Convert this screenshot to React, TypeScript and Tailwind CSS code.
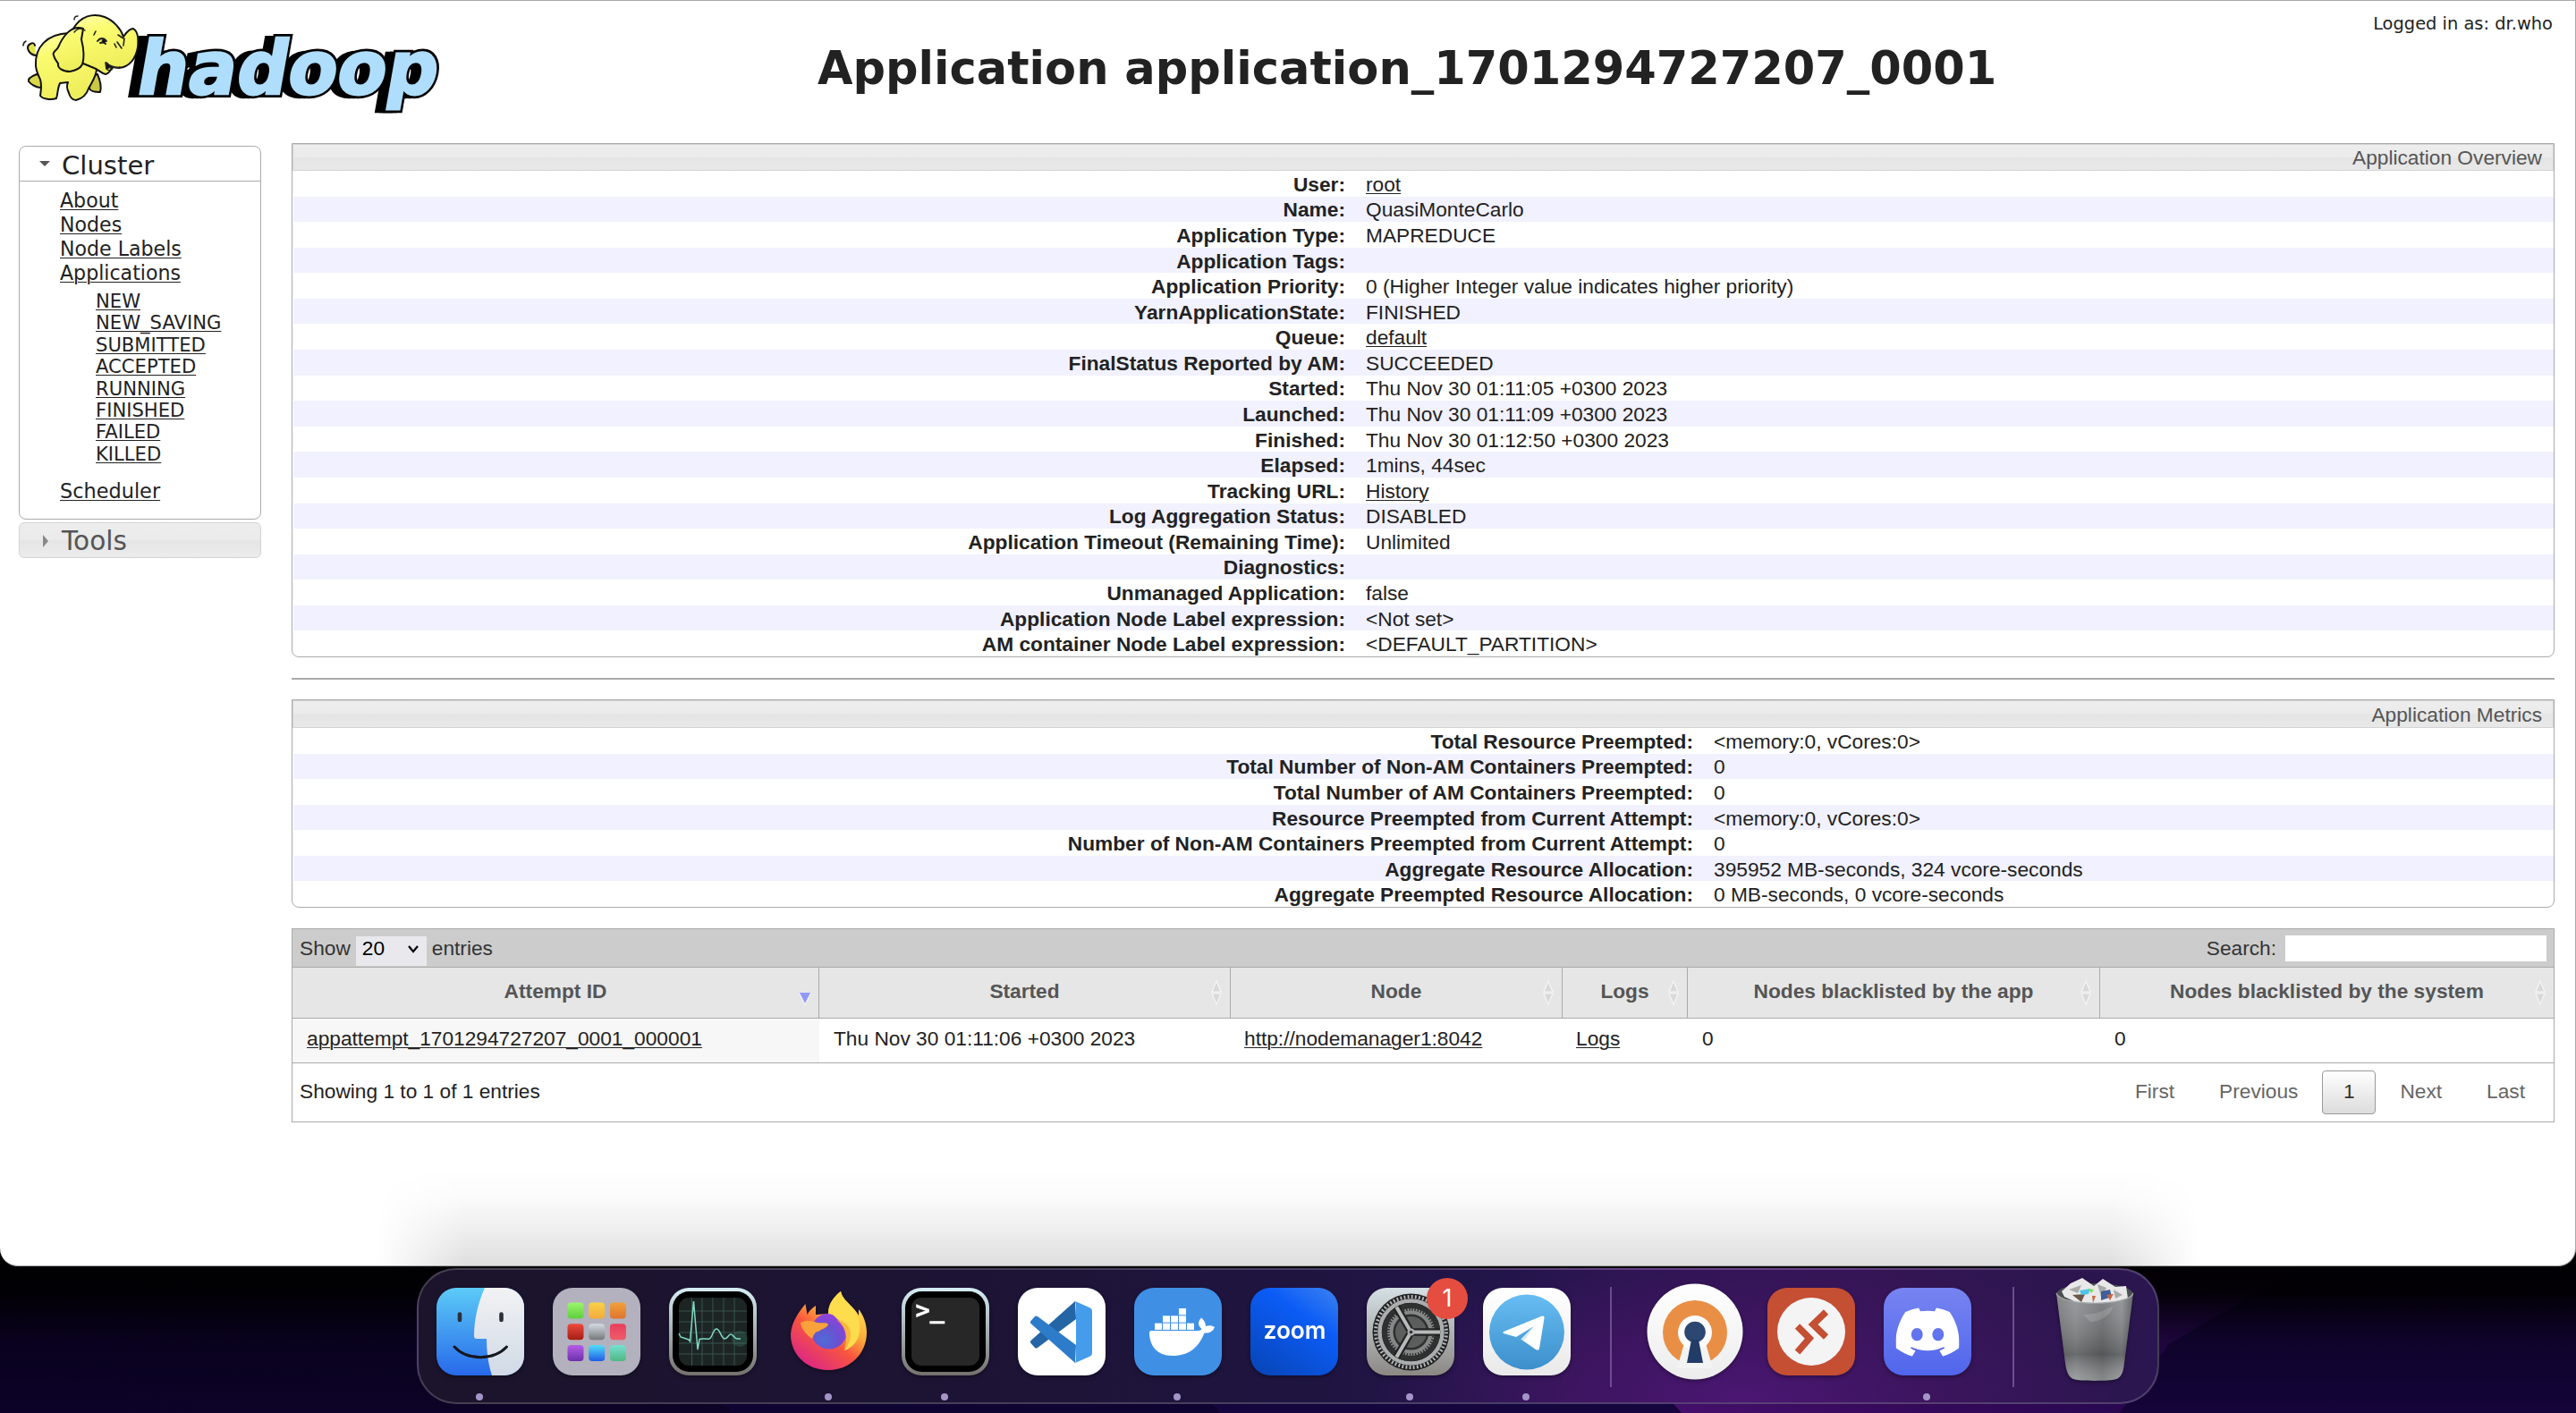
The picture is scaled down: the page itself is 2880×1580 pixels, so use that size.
import React from "react";
import { SiDiscord } from "react-icons/si";

const overview: [string, string, boolean?][] = [
  ["User:", "root", true],
  ["Name:", "QuasiMonteCarlo"],
  ["Application Type:", "MAPREDUCE"],
  ["Application Tags:", ""],
  ["Application Priority:", "0 (Higher Integer value indicates higher priority)"],
  ["YarnApplicationState:", "FINISHED"],
  ["Queue:", "default", true],
  ["FinalStatus Reported by AM:", "SUCCEEDED"],
  ["Started:", "Thu Nov 30 01:11:05 +0300 2023"],
  ["Launched:", "Thu Nov 30 01:11:09 +0300 2023"],
  ["Finished:", "Thu Nov 30 01:12:50 +0300 2023"],
  ["Elapsed:", "1mins, 44sec"],
  ["Tracking URL:", "History", true],
  ["Log Aggregation Status:", "DISABLED"],
  ["Application Timeout (Remaining Time):", "Unlimited"],
  ["Diagnostics:", ""],
  ["Unmanaged Application:", "false"],
  ["Application Node Label expression:", "<Not set>"],
  ["AM container Node Label expression:", "<DEFAULT_PARTITION>"],
];

const metrics: [string, string, boolean?][] = [
  ["Total Resource Preempted:", "<memory:0, vCores:0>"],
  ["Total Number of Non-AM Containers Preempted:", "0"],
  ["Total Number of AM Containers Preempted:", "0"],
  ["Resource Preempted from Current Attempt:", "<memory:0, vCores:0>"],
  ["Number of Non-AM Containers Preempted from Current Attempt:", "0"],
  ["Aggregate Resource Allocation:", "395952 MB-seconds, 324 vcore-seconds"],
  ["Aggregate Preempted Resource Allocation:", "0 MB-seconds, 0 vcore-seconds"],
];

const link = "underline decoration-1 underline-offset-[2px]";

function HadoopLogo() {
  const word = {
    fontFamily: '"DejaVu Sans", sans-serif',
    fontWeight: 700,
    fontSize: 83,
    textLength: 336,
    lengthAdjust: "spacingAndGlyphs" as const,
  };
  return (
    <svg width="500" height="140" viewBox="0 0 500 140" className="block shrink-0 overflow-visible">
      <defs>
        <linearGradient id="el" x1="0" y1="0" x2="0.3" y2="1">
          <stop offset="0" stopColor="#ffffb0" />
          <stop offset="0.35" stopColor="#fbfb70" />
          <stop offset="1" stopColor="#eeee5c" />
        </linearGradient>
      </defs>
      <g strokeLinejoin="miter" fill="#000" stroke="#000">
        <g transform="translate(150 104) skewX(-10)">
          <text {...word} x="-10" y="1" strokeWidth="6">hadoop</text>
          <text {...word} x="-5" y="1" strokeWidth="6">hadoop</text>
          <text {...word} x="0" y="0" strokeWidth="8">hadoop</text>
        </g>
      </g>
      <g transform="translate(150 104) skewX(-10)" fill="#afdefc" stroke="#afdefc" strokeWidth="2.5">
        <text {...word} x="0" y="0">hadoop</text>
      </g>
      <g stroke="#111" strokeWidth="2" strokeLinejoin="round" strokeLinecap="round" fill="url(#el)">
        <path d="M40 61c-8-1-12-10-6-13 3-2 5 0 5 2" fill="#e3e34e" />
        <path d="M41 82c-5 2-10 5-9 8 3 4 9 7 14 7l6-8Z" fill="#d8d84a" />
        <path d="M100 98c1 3 5 4 12 4 2-7 0-13-3-20l-8 2Z" fill="#c9c944" />
        <path d="M77 36C52 37 39 52 40 72c0 6 3 11 5 16 2 6 1 11 0 18 3 4 12 5 18 3 2-6 1-11 4-17l9-1c-2 4-1 8 1 12 1 4 4 8 8 8 8-2 12-7 14-13 4-8 9-14 9-22l4-14Z" />
        <path d="M82 31C90 17 104 13 117 18c10 4 18 13 21 22 3-4 6-9 11-9 5 3 6 12 5 21-2 12-9 22-21 23-4 0-6-1-8-1-1 3-2 7-7 8-5-1-9-6-13-7l-12-5-20-12Z" />
        <path d="M93 31C80 26 70 40 65 52c-2 4-7 5-5 9 1 4 3 6 5 9-1 5 5 9 13 9 6-1 12-4 14-8 3-9 1-20-1-28Z" />
      </g>
      <g fill="none" stroke="#222" strokeLinecap="round">
        <path d="M109 45c3-4 7-4 10 0M112 47c3-1 5-1 6 1" strokeWidth="2" />
        <circle cx="116" cy="45" r="2" fill="#111" />
        <path d="M105 38l2-4M132 38l6 4M131 46l5 7M128 48l2 4M139 42l-1 8M119 69c3 4 10 6 15 5M118 69l1 7c3 3 6 2 7-1" strokeWidth="1.6" />
        <path d="M83 35c4-5 8-5 12-2M26 50c0-2 1-4 3-5M83 21c0-3 1-4 4-4" strokeWidth="1.5" />
        <path d="M119 70l0 6 6-2Z" fill="#111" />
      </g>
    </svg>
  );
}

function Caption({ children, tall }: { children: string; tall?: boolean }) {
  return (
    <div
      className={
        (tall ? "h-[31px] " : "h-[30px] ") +
        "flex items-center justify-end border border-[#d3d3d3] bg-[linear-gradient(#ededed_0%,#ebebeb_48%,#e5e5e5_52%,#e8e8e8_100%)] pr-[12px] pt-px text-[#555]"
      }
    >
      {children}
    </div>
  );
}

function InfoPanel({ title, rows, cols, body, tall }: { title: string; rows: [string, string, boolean?][]; cols: string; body: string; tall?: boolean }) {
  return (
    <section className="rounded-b-[8px] border border-[#aaa]">
      <Caption tall={tall}>{title}</Caption>
      <div className={body}>
        {rows.map(([k, v, l], i) => (
          <div key={k} className={`grid min-h-0 flex-1 items-center gap-x-[23px] pt-px leading-[26px] ${cols} ${i % 2 ? "ml-px bg-[#f1f1ff]" : "ml-px"}`}>
            <span className="text-right font-bold">{k}</span>
            <span>{l ? <a className={link}>{v}</a> : v}</span>
          </div>
        ))}
      </div>
    </section>
  );
}

function SortIcon() {
  return (
    <svg width="14" height="30" viewBox="0 0 14 30" className="absolute right-[8px] top-[13px]">
      <path d="M7 2 12 14H2ZM7 28 2 16H12Z" fill="#d9d9d9" stroke="#f5f5f5" strokeWidth="1.2" />
    </svg>
  );
}

function Th({ children, sorted, last }: { children: string; sorted?: boolean; last?: boolean }) {
  return (
    <div className={`relative flex items-center justify-center pb-[3px] font-bold text-[#555] ${last ? "" : "border-r border-[#aaa]"}`}>
      {children}
      {sorted ? (
        <svg width="14" height="16" viewBox="0 0 14 16" className="absolute right-[8px] top-[28px]">
          <path d="M0 1H14L7 15Z" fill="#f4f4f4" />
          <path d="M1 0H13L7 12Z" fill="#9297fb" />
        </svg>
      ) : (
        <SortIcon />
      )}
    </div>
  );
}

const columns = "grid grid-cols-[589px_460px_371px_140px_461px_1fr]";

function AttemptsTable() {
  return (
    <section className="mt-[23px] w-[2530px] border border-[#aaa]">
      <div className="flex h-[43px] items-center justify-between border-b border-[#aaa] bg-[#ccc] pl-[8px] pr-[8px] text-[#333]">
        <div className="flex items-center">
          <span className="pt-px">Show</span>
          <span className="ml-[6px] mt-[6px] flex h-[33px] w-[79px] items-center justify-between bg-[#e9e9ed] pl-[7px] pr-[7px] pb-[5px] text-black">
            20
            <svg width="16" height="16" viewBox="0 0 16 16"><path d="m3 5 5 6 5-6" fill="none" stroke="#000" strokeWidth="2.2" /></svg>
          </span>
          <span className="ml-[6px] pt-px">entries</span>
        </div>
        <div className="flex items-center">
          <span className="pt-px">Search:</span>
          <span className="ml-[10px] mt-[2px] h-[29px] w-[292px] bg-white" />
        </div>
      </div>
      <div className={`${columns} h-[57px] border-b border-[#aaa] bg-[#e6e6e6]`}>
        <Th sorted>Attempt ID</Th>
        <Th>Started</Th>
        <Th>Node</Th>
        <Th>Logs</Th>
        <Th>Nodes blacklisted by the app</Th>
        <Th last>Nodes blacklisted by the system</Th>
      </div>
      <div className={`${columns} h-[50px] border-b border-[#aaa] *:flex *:items-center *:pl-4 *:pb-1`}>
        <div className="bg-[#f7f7f7]"><a className={link}>appattempt_1701294727207_0001_000001</a></div>
        <div>Thu Nov 30 01:11:06 +0300 2023</div>
        <div className="-ml-px"><a className={link}>http://nodemanager1:8042</a></div>
        <div className="-ml-px"><a className={link}>Logs</a></div>
        <div>0</div>
        <div>0</div>
      </div>
      <div className="flex h-[65px] items-center justify-between pl-[8px] pr-[32px]">
        <span className="pb-[3px]">Showing 1 to 1 of 1 entries</span>
        <div className="flex items-center text-[#666]">
          <span className="pb-[3px]">First</span>
          <span className="ml-[50px] pb-[3px]">Previous</span>
          <span className="ml-[27px] flex h-[49px] w-[60px] items-center justify-center rounded-[4px] border border-[#999] bg-linear-to-b from-white to-[#dcdcdc] pb-[3px] text-[#333]">1</span>
          <span className="ml-[27px] pb-[3px]">Next</span>
          <span className="ml-[50px] pb-[3px]">Last</span>
        </div>
      </div>
    </section>
  );
}

function Sidebar() {
  return (
    <nav className="ml-[21px] mt-[3px] w-[271px] shrink-0 font-['DejaVu_Sans',sans-serif]">
      <div className="h-[418px] rounded-[8px] border border-[#aaa]">
        <div className="flex h-[39px] items-center border-b border-[#aaa] pl-[21px] pt-[5px] text-[29.1px]">
          <svg width="14" height="8" viewBox="0 0 14 8" className="-mt-[3px] mr-[12px]"><path d="M1 0H13L7 6Z" fill="#555" /></svg>
          Cluster
        </div>
        <ul className="mt-[8px] pl-[45px] text-[22.1px] leading-[27px]">
          {["About", "Nodes", "Node Labels", "Applications"].map((t) => (
            <li key={t}><a className={link}>{t}</a></li>
          ))}
        </ul>
        <ul className="mt-[6px] pl-[85px] text-[21.13px] leading-[24.4px]">
          {["NEW", "NEW_SAVING", "SUBMITTED", "ACCEPTED", "RUNNING", "FINISHED", "FAILED", "KILLED"].map((t) => (
            <li key={t}><a className={link}>{t}</a></li>
          ))}
        </ul>
        <div className="mt-[16px] pl-[45px] text-[22.4px] leading-[27px]"><a className={link}>Scheduler</a></div>
      </div>
      <div className="mt-[3px] flex h-[40px] items-center rounded-[6px] border border-[#d3d3d3] bg-[linear-gradient(#ededed_0%,#ebebeb_48%,#e5e5e5_52%,#ececec_100%)] pl-[25px] pt-[2px] text-[29.6px] text-[#555]">
        <svg width="8" height="14" viewBox="0 0 8 14" className="mr-[14px]"><path d="M1 0 7 7 1 14Z" fill="#888" /></svg>
        Tools
      </div>
    </nav>
  );
}

function Squircle({ fill }: { fill: string }) {
  return <rect x="0" y="0" width="98" height="98" rx="22" fill={fill} />;
}

function Grad({ id, from, to, x2 = 0, y2 = 1 }: { id: string; from: string; to: string; x2?: number; y2?: number }) {
  return (
    <linearGradient id={id} x1="0" y1="0" x2={x2} y2={y2}>
      <stop offset="0" stopColor={from} />
      <stop offset="1" stopColor={to} />
    </linearGradient>
  );
}

function Finder() {
  return (
    <>
      <defs>
        <Grad id="fa" from="#5ccbf7" to="#2769ea" />
        <Grad id="fb" from="#f2f2f4" to="#d0dae6" />
        <clipPath id="fc"><rect width="98" height="98" rx="22" /></clipPath>
      </defs>
      <Squircle fill="url(#fa)" />
      <path clipPath="url(#fc)" d="M54 0C46 18 42 36 42 54q0 3 3 3H56C56 72 58 86 62 98H98V0Z" fill="url(#fb)" />
      <path d="M26 29.500v6.500M72.500 29.500v6.500" stroke="#2b2f36" strokeWidth="4.600" strokeLinecap="round" />
      <path d="M20 66c14 15.500 44 15.500 58.500 0" fill="none" stroke="#15171c" strokeWidth="3" strokeLinecap="round" />
    </>
  );
}

const tiles: [string, string][] = [
  ["#9df56a", "#5dcf3c"], ["#f8d147", "#f3ab3c"], ["#f0a13a", "#df7430"],
  ["#ec4a3c", "#a51d14"], ["#d3dbe2", "#76787a"], ["#e83f5c", "#ee5c69"],
  ["#b45de5", "#6c30ac"], ["#52dcfb", "#1f5be6"], ["#79e0d0", "#4fb783"],
];

function Launchpad() {
  return (
    <>
      <Squircle fill="#b3b1bd" />
      {tiles.map(([a, b], i) => (
        <g key={a}>
          <defs><Grad id={`lp${i}`} from={a} to={b} /></defs>
          <rect x={16.500 + (i % 3) * 23.700} y={16.500 + Math.floor(i / 3) * 23.800} width="18" height="18" rx="4" fill={`url(#lp${i})`} />
        </g>
      ))}
    </>
  );
}

function Bezel({ id, screen }: { id: string; screen: string }) {
  return (
    <>
      <defs><Grad id={id} from="#d6edf5" to="#74716e" /></defs>
      <Squircle fill={`url(#${id})`} />
      <rect x="4" y="4" width="90" height="90" rx="18.500" fill="#000" />
      <rect x="11" y="11" width="76" height="76" rx="11" fill={screen} />
    </>
  );
}

function Activity() {
  return (
    <>
      <Bezel id="ab" screen="#1c2523" />
      <path d="M25.500 11V87M37 11V87M49 11V87M61 11V87M73 11V87M11 26H87M11 38H87M11 50H87M11 62H87M11 74H87" stroke="#3f5f58" strokeWidth="0.900" opacity="0.900" />
      <circle cx="79" cy="57" r="9" fill="#3f8f7c" opacity="0.250" />
      <path d="M11 51 13 55 22 58 23.500 60 27.500 15 32 69 34 57.500C38 56 41 58 45 57 49 55 49 46 53 46S58 56 62 57C66 57 66 52 69 52S73 57 76 57H80" fill="none" stroke="#7fd8c4" strokeWidth="1.500" />
    </>
  );
}

function Firefox() {
  return (
    <>
      <defs>
        <linearGradient id="ffa" x1="0.850" y1="0.100" x2="0.250" y2="0.950">
          <stop offset="0" stopColor="#ffe452" />
          <stop offset="0.350" stopColor="#fdaa3a" />
          <stop offset="0.600" stopColor="#f9553f" />
          <stop offset="1" stopColor="#dd2a80" />
        </linearGradient>
        <radialGradient id="ffb" cx="0.350" cy="0.750" r="0.850">
          <stop offset="0" stopColor="#4f6bd6" />
          <stop offset="0.500" stopColor="#6d4fd0" />
          <stop offset="1" stopColor="#a53be0" />
        </radialGradient>
      </defs>
      <path d="M62 4C54 10 48 18 48 29L34 30V20C29 23 26 27 24.500 30L22.500 18C15 27 7 38 6 52 6 75 24 92 48 92S91 74 91 50C91 40 87 30 82 24L82 31C78 22 64 15 62 4Z" fill="url(#ffa)" />
      <circle cx="49" cy="48.500" r="20" fill="url(#ffb)" />
      <path d="M48 29C48 18 54 10 62 4 63 14 78 20 82 34 87 54 78 66 66 70 74 60 74 44 58 35 55 31 52 29 48 29Z" fill="#fddc4d" />
      <path d="M58 36C74 38 78 56 66 69 70 56 68 44 58 36Z" fill="#fdb43b" />
      <path d="M17 39C25 35 30 37 36 39 41 40 46 38 48 41 47 45 40 46 37 49 33 48 31 55 30 57 25 54 17 45 17 39Z" fill="#f9a13a" />
    </>
  );
}

function Terminal() {
  return (
    <>
      <Bezel id="tb" screen="#272727" />
      <text x="15.500" y="34" fill="#fff" stroke="#fff" strokeWidth="0.500" fontFamily='"DejaVu Sans Mono", monospace' fontWeight="700" fontSize="27">&gt;_</text>
    </>
  );
}

function VsCode() {
  return (
    <>
      <Squircle fill="#fff" />
      <path d="M64 15 14.500 59Q13 60.500 14.500 62L19 67Q20.500 68 22 67L65 35Z" fill="#2465a5" />
      <path d="M64 84 14.500 40Q13 38.500 14.500 37L19 32Q20.500 31 22 32L65 64Z" fill="#2d7cc9" />
      <path d="M64 15 81 22.500Q83 23.500 83 26V73Q83 75.500 81 76.500L64 84Q65 82 65 79V20Z" fill="#459ceb" />
    </>
  );
}

function Docker() {
  const boxes = [[50, 23], [32, 31.3], [41, 31.3], [50, 31.3], [23, 39.6], [32, 39.6], [41, 39.6], [50, 39.6], [59, 39.6]];
  return (
    <>
      <Squircle fill="#3f90e5" />
      {boxes.map(([x, y]) => <rect key={`${x}-${y}`} x={x} y={y} width="8" height="7.300" fill="#fff" />)}
      <path d="M17 50Q17 48 19 48H70C73 48 75 47.500 75.500 46 71 42 71 38 75 33.500 79 37 80 40 80 43 83 42 87 42 90 44 88 49 84 51 78.500 50.500 72 67 61 76 43 76 25 76 17 64 17 50Z" fill="#fff" />
    </>
  );
}

function Zoom() {
  return (
    <>
      <defs>
        <linearGradient id="zg" x1="0.900" y1="0" x2="0.200" y2="1">
          <stop offset="0" stopColor="#377ef0" />
          <stop offset="0.350" stopColor="#0b5cf6" />
          <stop offset="1" stopColor="#0847bd" />
        </linearGradient>
      </defs>
      <Squircle fill="url(#zg)" />
      <text x="14.500" y="56.500" fill="#fff" fontFamily='Inter, sans-serif' fontWeight="600" fontSize="27.500" textLength="70" lengthAdjust="spacingAndGlyphs">zoom</text>
    </>
  );
}

function Settings() {
  return (
    <>
      <defs><Grad id="sg" from="#d5e0e5" to="#8b8883" /></defs>
      <Squircle fill="url(#sg)" />
      <circle cx="49.500" cy="49.500" r="43" fill="#222323" />
      <circle cx="49.500" cy="49.500" r="39.500" fill="none" stroke="#b8bcbc" strokeWidth="4" strokeDasharray="1.800 2.336" />
      <circle cx="49.500" cy="49.500" r="35" fill="none" stroke="#a9adad" strokeWidth="4.500" />
      <circle cx="49.500" cy="49.500" r="32.500" fill="#2f3030" />
      <circle cx="49.500" cy="49.500" r="25" fill="none" stroke="#8d9090" strokeWidth="3" strokeDasharray="1.600 1.540" />
      <circle cx="49.500" cy="49.500" r="22" fill="none" stroke="#858888" strokeWidth="4" />
      <circle cx="49.500" cy="49.500" r="17.500" fill="#5c5e5e" />
      <path d="M49.500 49.500H82M49.500 49.500 33.300 21.400M49.500 49.500 33.300 77.600" stroke="#222323" strokeWidth="8.500" />
      <path d="M49.500 49.500H82M49.500 49.500 33.300 21.400M49.500 49.500 33.300 77.600" stroke="#b7baba" strokeWidth="4" />
      <circle cx="49.500" cy="49.500" r="4" fill="#aaadad" />
      <circle cx="49.500" cy="49.500" r="1.800" fill="#333" />
    </>
  );
}

function Telegram() {
  return (
    <>
      <defs><Grad id="tga" from="#ffffff" to="#e9e9e9" /><Grad id="tgb" from="#67bdf3" to="#3c8fcb" /></defs>
      <Squircle fill="url(#tga)" />
      <circle cx="49" cy="49.500" r="42" fill="url(#tgb)" />
      <path d="M23 49 66 31.500Q69 31 68.500 34L63 68Q62 71 59 69L42.500 57.500 57 43 37 55 23 51Q21.500 50 23 49Z" fill="#fff" />
      <path d="M42.500 57.500 57 43 46 59Z" fill="#d5e9f6" />
    </>
  );
}

function OpenVpn() {
  return (
    <>
      <defs><Grad id="og" from="#ffffff" to="#ececec" /></defs>
      <circle cx="49" cy="49" r="53.500" fill="url(#og)" />
      <circle cx="49" cy="50" r="36" fill="#e98f45" />
      <path d="M37 62H61L69 90H29Z" fill="#f3f3f3" />
      <circle cx="49" cy="50" r="19" fill="#fcfcfc" />
      <circle cx="49" cy="49.500" r="11.800" fill="#2c4770" />
      <path d="M45 58H53L58 84H40Z" fill="#223c68" />
    </>
  );
}

function RemoteDesktop() {
  return (
    <>
      <Squircle fill="#c44f33" />
      <circle cx="49" cy="49" r="38" fill="#f4f4f4" />
      <g fill="none" stroke="#c44f33" strokeWidth="7.500" strokeLinejoin="miter">
        <path d="M33.500 43 47 56.500 33.500 72" />
        <path d="M65.500 27 51 41 65.500 55" />
      </g>
    </>
  );
}

function Discord() {
  return (
    <>
      <defs><Grad id="dg" from="#7784f1" to="#5066ec" /></defs>
      <Squircle fill="url(#dg)" />
      <SiDiscord x="13.500" y="14" size={71} color="#fff" />
    </>
  );
}

function Trash() {
  return (
    <>
      <defs>
        <linearGradient id="tra" x1="0" y1="0" x2="1" y2="0">
          <stop offset="0" stopColor="#77797b" />
          <stop offset="0.250" stopColor="#8d9092" />
          <stop offset="0.600" stopColor="#707375" />
          <stop offset="0.850" stopColor="#8b8e90" />
          <stop offset="1" stopColor="#55585a" />
        </linearGradient>
        <linearGradient id="trb" x1="0" y1="0" x2="0" y2="1">
          <stop offset="0" stopColor="#fff" stopOpacity="0.100" />
          <stop offset="0.700" stopColor="#000" stopOpacity="0.250" />
          <stop offset="1" stopColor="#fff" stopOpacity="0.150" />
        </linearGradient>
      </defs>
      <ellipse cx="49" cy="7" rx="43" ry="12" fill="#4b4e52" />
      <path d="M12 4 22-5 35-11 48-2 58-10 72-1 84-2 86 12 66 17H30L15 10Z" fill="#e8e8e8" />
      <path d="M20 2 34-3 30 6ZM52-4 62 0 56 10ZM70 2l10 6-8 4Z" fill="#a9a9a9" />
      <path d="M24 8l14-1-4 9Z" fill="#6b5648" />
      <path d="M32 3l12-2-2 6-8 1Z" fill="#4fc4e8" />
      <path d="M42 1l6 1-3 4Z" fill="#7ed957" />
      <path d="M56 4l10-2 2 8-12 4Z" fill="#3f5f9c" />
      <path d="M62 8l8-1-4 7ZM46 9l4 0-3 8Z" fill="#c8673f" />
      <path d="M6 6C10 21 88 21 92 6L82 84C80 106 72 103 49 104 26 103 19 106 16 84Z" fill="url(#tra)" />
      <path d="M6 6C10 21 88 21 92 6L82 84C80 106 72 103 49 104 26 103 19 106 16 84Z" fill="url(#trb)" />
      <path d="M6 6C10 21 88 21 92 6" fill="none" stroke="#a7aaac" strokeWidth="1.200" />
      <path d="M36 30C48 30 60 26 70 20 66 32 54 38 44 38Z" fill="#fff" opacity="0.140" />
    </>
  );
}

function DockItem({ children, running, badge }: { children: React.ReactNode; running?: boolean; badge?: string }) {
  return (
    <div className="relative flex h-full w-[98px] shrink-0 flex-col items-center pt-[20px]">
      <svg width="98" height="98" viewBox="0 0 98 98" className="overflow-visible drop-shadow-[0_2px_2px_rgba(0,0,0,0.35)]">{children}</svg>
      {running && <span className="mt-[20px] mr-[2px] size-[8px] rounded-full bg-[#a594c8]" />}
      {badge && (
        <span className="absolute -right-[15px] top-[9px] flex size-[46px] items-center justify-center rounded-full bg-[#e44d40] pt-px font-['Inter',sans-serif] text-[27px] text-white">{badge}</span>
      )}
    </div>
  );
}

function Divider() {
  return <span className="mt-[19px] h-[112px] w-[2px] shrink-0 bg-[#7d5a9c]/80" />;
}

function Wallpaper() {
  return (
    <svg width="2880" height="180" viewBox="0 0 2880 180" className="absolute bottom-0 left-0">
      <defs>
        <linearGradient id="wa" x1="0" y1="0" x2="1" y2="0">
          <stop offset="0" stopColor="#0c0228" />
          <stop offset="0.300" stopColor="#0c0326" />
          <stop offset="0.650" stopColor="#140539" />
          <stop offset="0.860" stopColor="#1b0640" />
          <stop offset="1" stopColor="#140439" />
        </linearGradient>
        <linearGradient id="wb" x1="0" y1="0" x2="1" y2="0">
          <stop offset="0" stopColor="#4a1171" />
          <stop offset="0.400" stopColor="#35095c" />
          <stop offset="1" stopColor="#1c0645" />
        </linearGradient>
        <linearGradient id="wc" x1="0" y1="0" x2="0" y2="1">
          <stop offset="0" stopColor="#000" />
          <stop offset="0.250" stopColor="#000" stopOpacity="0.900" />
          <stop offset="0.550" stopColor="#000" stopOpacity="0.250" />
          <stop offset="1" stopColor="#000" stopOpacity="0" />
        </linearGradient>
      </defs>
      <rect width="2880" height="180" fill="url(#wa)" />
      <path d="M800 165 820 180H1360L1350 165Z" fill="#0e0432" />
      <path d="M1350 165 1365 180H1880L1860 165Z" fill="#15063f" />
      <path d="M1800 90 1880 180H2370L2640 0H1800Z" fill="url(#wb)" />
      <path d="M2370 180 2425 103 2600 0H2880V180Z" fill="#140439" />
      <rect width="2880" height="180" fill="url(#wc)" />
    </svg>
  );
}

export default function App() {
  return (
    <div className="relative flex h-[1580px] w-[2880px] flex-col overflow-hidden bg-black font-['Liberation_Sans',Arial,sans-serif] text-[22.71px] whitespace-nowrap text-[#222]">
      <Wallpaper />
      <main className="relative h-[1416px] shrink-0 overflow-hidden rounded-b-[20px] border-t border-r border-b border-[#a8a8a8] bg-white">
        <header className="flex h-[159px] items-start font-['DejaVu_Sans',sans-serif]">
          <HadoopLogo />
          <h1 className="ml-[414px] mt-[46px] text-[51.04px] leading-[60px] font-bold">Application application_1701294727207_0001</h1>
          <span className="mt-[12px] ml-auto mr-[25px] text-[19.43px] leading-[28px]">Logged in as: dr.who</span>
        </header>
        <div className="flex items-start">
          <Sidebar />
          <div className="ml-[34px] w-[2530px]">
            <InfoPanel title="Application Overview" rows={overview} cols="grid-cols-[1176px_1fr]" body="flex h-[543px] flex-col" />
            <hr className="mt-[23px] mb-[22px] h-[2px] border-0 bg-[#aaa]" />
            <InfoPanel title="Application Metrics" rows={metrics} cols="grid-cols-[1565px_1fr]" body="flex h-[200px] flex-col" tall />
            <AttemptsTable />
          </div>
        </div>
        <div className="absolute bottom-0 left-[420px] h-[105px] w-[2040px] bg-[linear-gradient(0deg,rgba(0,0,0,0.13)_0%,rgba(0,0,0,0.07)_35%,rgba(0,0,0,0.02)_70%,transparent_100%)] [mask-image:linear-gradient(90deg,transparent,black_5%,black_95%,transparent)]" />
      </main>
      <footer className="relative mt-[2px] ml-[466px] flex h-[152px] w-[1948px] items-start rounded-[44px] border-2 border-white/18 bg-[radial-gradient(ellipse_420px_200px_at_1480px_150px,#4b1673_0%,#3d1560_45%,transparent_100%),linear-gradient(90deg,#1b142b_0%,#1d1436_35%,#21154a_65%,#31154f_82%,#2b1650_100%)] pl-[20px]">
        <div className="flex h-full gap-[32px]">
          <DockItem running><Finder /></DockItem>
          <DockItem><Launchpad /></DockItem>
          <DockItem><Activity /></DockItem>
          <DockItem running><Firefox /></DockItem>
          <DockItem running><Terminal /></DockItem>
          <DockItem><VsCode /></DockItem>
          <DockItem running><Docker /></DockItem>
          <DockItem><Zoom /></DockItem>
          <DockItem running badge="1"><Settings /></DockItem>
          <DockItem running><Telegram /></DockItem>
        </div>
        <div className="ml-[44px] flex h-full">
          <Divider />
          <div className="mr-[46px] ml-[44px] flex h-full gap-[32px]">
            <DockItem><OpenVpn /></DockItem>
            <DockItem><RemoteDesktop /></DockItem>
            <DockItem running><Discord /></DockItem>
          </div>
          <Divider />
          <div className="ml-[41px] h-full"><DockItem><Trash /></DockItem></div>
        </div>
      </footer>
    </div>
  );
}
